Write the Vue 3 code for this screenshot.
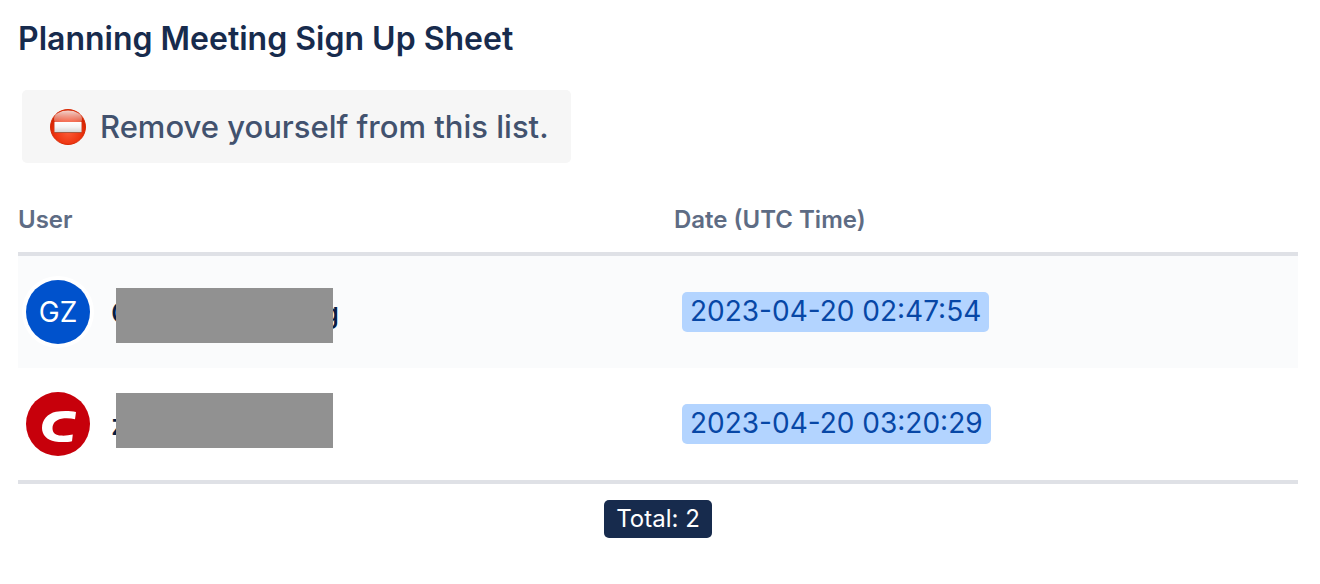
<script setup>
import { computed } from 'vue'

const signups = [
  { id: 1, avatar: 'initials', initials: 'GZ', first: 'G', last: 'g', date: '2023-04-20 02:47:54' },
  { id: 2, avatar: 'logo', initials: '', first: 'z', last: '', date: '2023-04-20 03:20:29' }
]

const total = computed(() => signups.length)
</script>

<template>
  <main class="sheet">
    <h1 class="title">Planning Meeting Sign Up Sheet</h1>

    <button type="button" class="remove-btn">
      <svg class="remove-icon" viewBox="0 0 36 36" aria-hidden="true">
        <defs>
          <radialGradient id="ball" cx="50%" cy="64%" r="56%">
            <stop offset="0" stop-color="#fb5a35" />
            <stop offset="0.65" stop-color="#ee3511" />
            <stop offset="1" stop-color="#cf2200" />
          </radialGradient>
          <linearGradient id="gloss" x1="0" y1="0" x2="0" y2="1">
            <stop offset="0" stop-color="#fff" stop-opacity="0.8" />
            <stop offset="0.6" stop-color="#fff" stop-opacity="0.3" />
            <stop offset="1" stop-color="#fff" stop-opacity="0.1" />
          </linearGradient>
          <linearGradient id="bar" x1="0" y1="0" x2="0" y2="1">
            <stop offset="0" stop-color="#fff" />
            <stop offset="0.5" stop-color="#f4f4f4" />
            <stop offset="1" stop-color="#d6d6d6" />
          </linearGradient>
        </defs>
        <circle cx="18" cy="18" r="17.5" fill="url(#ball)" stroke="#d92a05" />
        <ellipse cx="18" cy="10" rx="14" ry="8.5" fill="url(#gloss)" />
        <rect x="4.5" y="13" width="27" height="11" fill="#a9573f" />
        <rect x="4.5" y="13" width="27" height="10" fill="url(#bar)" />
      </svg>
      <span>Remove yourself from this list.</span>
    </button>

    <table class="users">
      <thead>
        <tr>
          <th class="col-user" scope="col">User</th>
          <th scope="col">Date (UTC Time)</th>
        </tr>
      </thead>
      <tbody>
        <tr v-for="row in signups" :key="row.id">
          <td>
            <div class="user">
              <span class="avatar" :class="row.avatar">
                <template v-if="row.initials">{{ row.initials }}</template>
                <svg v-else viewBox="0 0 64 64" aria-hidden="true">
                  <path
                    d="M50 20 L49 27.2 C45 26.4 40 26 35.5 26.8 C29 28 26.5 32 26.5 36.5 C26.5 41 30 43.4 35 43.6 C39 43.8 43 43.4 46.8 42.6 L46 49.2 C41 50.3 34 50.3 29 49.4 C21 48 16 43 16 36 C16 28 21.5 21.5 30 19.8 C36 18.8 44 18.8 50 20 Z"
                    fill="#fff"
                  />
                </svg>
              </span>
              <span class="name">
                <span>{{ row.first }}</span>
                <span>{{ row.last }}</span>
                <span class="mask"></span>
              </span>
            </div>
          </td>
          <td>
            <time class="date">{{ row.date }}</time>
          </td>
        </tr>
      </tbody>
    </table>

    <div class="footer">
      <span class="total">Total: {{ total }}</span>
    </div>
  </main>
</template>

<style>
body {
  background: #fff;
}
</style>

<style scoped>
.sheet {
  padding: 19px 22px 46px 18px;
  font-family: Inter, 'Liberation Sans', sans-serif;
  color: #172b4d;
}

/* TITLE */
.title {
  margin: 0 0 31px;
  font-size: 32px;
  line-height: 40px;
  font-weight: 600;
}

/* REMOVE BUTTON */
.remove-btn {
  display: flex;
  align-items: center;
  gap: 14px;
  margin-left: 4px;
  padding: 17px 22px 16px 28px;
  border: none;
  border-radius: 5px;
  background: #f6f6f6;
  color: #42526e;
  font-family: inherit;
  font-size: 31px;
  line-height: 40px;
  font-weight: 500;
  cursor: pointer;
}
.remove-icon {
  width: 36px;
  height: 36px;
  flex-shrink: 0;
}

/* TABLE */
.users {
  width: 100%;
  margin-top: 41px;
  border-collapse: separate;
  border-spacing: 0;
  border-bottom: 4px solid #dfe1e6;
}
th {
  padding: 0 0 16px;
  border-bottom: 4px solid #dfe1e6;
  color: #5e6c84;
  font-size: 24px;
  line-height: 32px;
  font-weight: 600;
  text-align: left;
}
.col-user {
  width: 51.25%;
}
td {
  height: 112px;
  padding: 0 8px;
  vertical-align: middle;
}
tbody tr:nth-child(odd) {
  background: #fafbfc;
}

.user {
  display: flex;
  align-items: center;
  gap: 21px;
}
.avatar {
  display: flex;
  align-items: center;
  justify-content: center;
  width: 64px;
  height: 64px;
  border-radius: 50%;
  box-shadow: 0 0 0 4px #fff;
  color: #fff;
  font-size: 28px;
}
.initials { background: #0052cc; }
.logo { background: #c7000b; }

/* NAME, COVERED UP TO ITS OUTER LETTERS */
.name {
  position: relative;
  display: flex;
  justify-content: space-between;
  width: 228px;
  padding-top: 2px;
  color: #091e42;
  font-size: 28px;
  line-height: 40px;
  font-weight: 500;
}
.mask {
  position: absolute;
  top: -3px;
  left: 5px;
  width: 217px;
  height: 55px;
  background: #919191;
}
tbody tr:nth-child(even) .mask {
  top: -10px;
}

.date {
  display: inline-block;
  padding: 0 8px 2px;
  border-radius: 5px;
  background: #b3d4ff;
  color: #0747a6;
  font-size: 28px;
  line-height: 38px;
}

/* TOTAL */
.footer {
  display: flex;
  justify-content: center;
  margin-top: 16px;
}
.total {
  padding: 0 12px;
  border-radius: 5px;
  background: #172b4d;
  color: #fff;
  font-size: 24px;
  line-height: 38px;
}
</style>
